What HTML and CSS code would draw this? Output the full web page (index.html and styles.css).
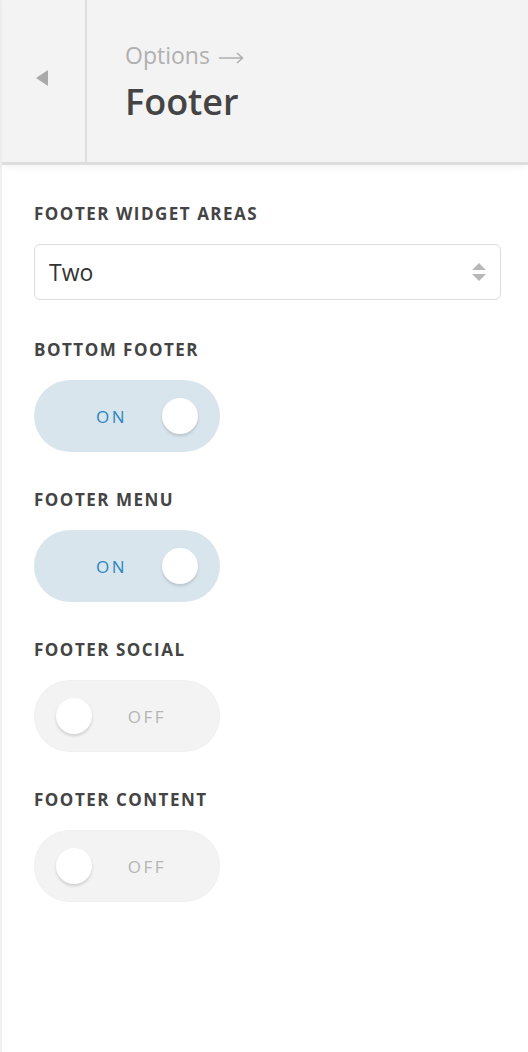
FILE: index.html
```html
<!DOCTYPE html>
<html lang="en">
<head>
    <meta charset="UTF-8">
    <meta name="viewport" content="width=device-width, initial-scale=1.0">
    <title>Footer</title>
    <link rel="stylesheet" href="styles.css">
</head>
<body>
    <div class="panel">
        <div class="head">
            <button class="back" aria-label="Back">
                <svg width="12" height="16" viewBox="0 0 12 16"><path d="M12 0 L12 16 L0 8 Z" fill="#aaaaaa"/></svg>
            </button>
            <div class="title">
                <span class="crumb">Options <svg class="arrow" width="25" height="12" viewBox="0 0 25 12"><path d="M0 6 H23.5 M18 1 L23.5 6 L18 11" fill="none" stroke="#b0b0b0" stroke-width="1.6"/></svg></span>
                <h1>Footer</h1>
            </div>
        </div>

        <div class="body">
            <div class="field">
                <label>Footer Widget Areas</label>
                <div class="select">
                    <span>Two</span>
                    <svg width="14" height="20" viewBox="0 0 14 20"><path d="M7 1 L14 8 L0 8 Z M0 12 L14 12 L7 19 Z" fill="#b8b8b8"/></svg>
                </div>
            </div>

            <div class="field">
                <label>Bottom Footer</label>
                <div class="toggle on"><span class="txt">ON</span><span class="knob"></span></div>
            </div>

            <div class="field">
                <label>Footer Menu</label>
                <div class="toggle on"><span class="txt">ON</span><span class="knob"></span></div>
            </div>

            <div class="field">
                <label>Footer Social</label>
                <div class="toggle off"><span class="knob"></span><span class="txt">OFF</span></div>
            </div>

            <div class="field">
                <label>Footer Content</label>
                <div class="toggle off"><span class="knob"></span><span class="txt">OFF</span></div>
            </div>
        </div>
    </div>
</body>
</html>
```

FILE: styles.css
```css
html, body {
    margin: 0;
    padding: 0;
    background: #fff;
}

body {
    font-family: "Open Sans", "Liberation Sans", sans-serif;
    color: #444;
}

.panel {
    width: 528px;
    min-height: 1052px;
    border-left: 2px solid #f0f0f0;
    box-sizing: border-box;
}

.head {
    display: flex;
    height: 162px;
    background-color: #f3f3f3;
    border-bottom: 3px solid #dddddd;
    box-shadow: 0 3px 8px rgba(0, 0, 0, 0.04);
}

.back {
    width: 85px;
    border: none;
    border-right: 2px solid #dedede;
    background: none;
    display: flex;
    align-items: center;
    justify-content: center;
    padding: 0 4px 6px 0;
    cursor: pointer;
}

.title {
    display: flex;
    flex-direction: column;
    justify-content: center;
    padding: 4px 0 2px 38px;
}

.crumb {
    font-size: 23px;
    color: #b0b0b0;
    line-height: 30px;
    height: 30px;
}

.crumb .arrow {
    margin-left: 3px;
    vertical-align: 0;
}

.title h1 {
    margin: 9px 0 0 0;
    font-size: 36px;
    font-weight: 600;
    color: #444;
    line-height: 46px;
}

.body {
    padding: 37px 27px 0 32px;
}

.field {
    margin-bottom: 36px;
}

.field:first-child {
    margin-bottom: 38px;
}

.field label {
    display: block;
    font-size: 17px;
    font-weight: 700;
    letter-spacing: 1.5px;
    text-transform: uppercase;
    color: #444;
    line-height: 24px;
    margin-bottom: 18px;
}

.select {
    display: flex;
    align-items: center;
    justify-content: space-between;
    height: 56px;
    border: 1px solid #dcdcdc;
    border-radius: 6px;
    padding: 0 14px;
    box-sizing: border-box;
    font-size: 23px;
    color: #333;
}

.toggle {
    width: 186px;
    height: 72px;
    border-radius: 36px;
    display: flex;
    align-items: center;
    box-sizing: border-box;
    font-size: 17px;
    font-weight: 400;
    letter-spacing: 2.5px;
}

.toggle .knob {
    width: 36px;
    height: 36px;
    border-radius: 50%;
    background: #fff;
    box-shadow: 0 2px 3px rgba(0, 0, 0, 0.15);
}

.toggle.on {
    background-color: #d9e5ed;
    color: #2e86c1;
    padding: 0 22px 0 62px;
    justify-content: space-between;
}

.toggle.off {
    background-color: #f3f3f3;
    color: #b5b5b5;
    padding: 0 54px 0 22px;
    justify-content: space-between;
    box-shadow: inset 0 0 2px rgba(0, 0, 0, 0.05);
}
```
